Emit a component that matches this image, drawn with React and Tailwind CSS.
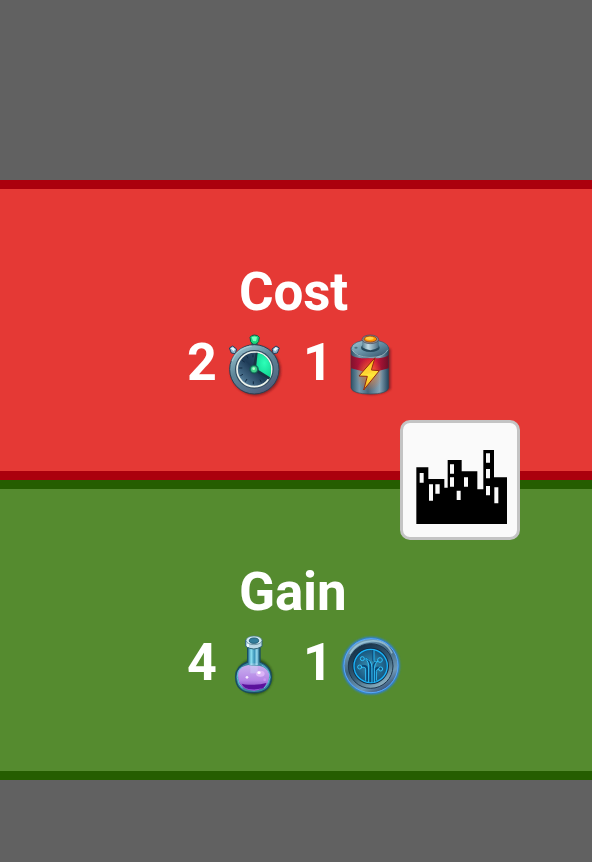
import React from 'react';

function Stopwatch() {
  return (
    <svg className="h-[74px] w-[70px] shrink-0" viewBox="0 0 210 222">
      <defs>
        <linearGradient id="sw-case" x1="0.2" y1="0" x2="0.8" y2="1">
          <stop offset="0" stopColor="#9cc6d2" />
          <stop offset="0.4" stopColor="#5f8799" />
          <stop offset="0.75" stopColor="#567089" />
          <stop offset="1" stopColor="#4b5575" />
        </linearGradient>
        <linearGradient id="sw-dial" x1="1" y1="0" x2="0" y2="1">
          <stop offset="0" stopColor="#355d76" />
          <stop offset="0.5" stopColor="#1e3b57" />
          <stop offset="1" stopColor="#6a97b4" />
        </linearGradient>
        <radialGradient id="sw-green" cx="0.6" cy="0.4" r="0.7">
          <stop offset="0" stopColor="#2dffb8" />
          <stop offset="1" stopColor="#0cce8c" />
        </radialGradient>
        <filter id="sw-shadow"><feGaussianBlur stdDeviation="3" /></filter>
      </defs>
      <ellipse cx="107" cy="128" rx="76" ry="75" fill="#64151b" opacity="0.65" filter="url(#sw-shadow)" />
      <path d="M94 42h19v15H94z" fill="#315c67" />
      <path d="M90 28q4-7 13-7 11 0 15 7l-2 13-8 8H99l-7-8z" fill="#1bd77c" stroke="#165346" strokeWidth="3" />
      <path d="M95 28q8-5 16 0l-3 12-9-1z" fill="#79ffc1" />
      <path d="m28 60 10-6 12 9-4 14-12-2z M178 60l-10-6-12 9 4 14 12-2z" fill="#91b7d0" stroke="#283d59" strokeWidth="3" />
      <path d="m32 61 7-3 6 6-4 6z M174 61l-7-3-6 6 4 6z" fill="#eefaff" />
      <circle cx="103" cy="124" r="74" fill="url(#sw-case)" stroke="#2b4053" strokeWidth="3" />
      <path d="M36 100Q48 61 95 54" fill="none" stroke="#b4dae1" strokeWidth="5" opacity="0.6" />
      <circle cx="103" cy="124" r="58" fill="#344c60" />
      <circle cx="103" cy="124" r="52" fill="url(#sw-dial)" stroke="#edf4ed" strokeWidth="5" />
      <path d="M103 124 112 74Q140 80 151 108 156 130 150 150z" fill="url(#sw-green)" />
      <path d="M99 79v9M80 83l4 8M66 97l8 5M57 120h10M61 143l8-4M76 161l5-8M100 169v-9M124 163l-4-8" stroke="#122a43" strokeWidth="3" />
      <path d="M98 119 107 74h6l-5 45zM103 129l4-8 43 27-2 7z" fill="#193344" />
      <circle cx="102" cy="124" r="13" fill="#187b60" stroke="#17464d" strokeWidth="2" />
      <circle cx="102" cy="124" r="9" fill="#42d58b" />
      <circle cx="101" cy="122" r="4" fill="#b2ffd0" />
    </svg>
  );
}

function Battery() {
  return (
    <svg className="h-[74px] w-[66px] shrink-0" viewBox="-6 0 198 222">
      <defs>
        <linearGradient id="bt-metal">
          <stop offset="0" stopColor="#2f5368" />
          <stop offset="0.22" stopColor="#7699ad" />
          <stop offset="0.45" stopColor="#46657c" />
          <stop offset="0.76" stopColor="#87a5b6" />
          <stop offset="1" stopColor="#22445c" />
        </linearGradient>
        <linearGradient id="bt-red">
          <stop offset="0" stopColor="#82112d" />
          <stop offset="0.25" stopColor="#b3143a" />
          <stop offset="0.6" stopColor="#e41a38" />
          <stop offset="0.8" stopColor="#a01233" />
          <stop offset="1" stopColor="#6e0f27" />
        </linearGradient>
        <linearGradient id="bt-top" x1="0" y1="0" x2="1" y2="1">
          <stop offset="0" stopColor="#a7c9d4" />
          <stop offset="0.5" stopColor="#6690a5" />
          <stop offset="1" stopColor="#314e65" />
        </linearGradient>
        <linearGradient id="bt-neck">
          <stop offset="0" stopColor="#5a7f92" />
          <stop offset="0.35" stopColor="#c1dae4" />
          <stop offset="1" stopColor="#4a6a80" />
        </linearGradient>
        <radialGradient id="bt-glow">
          <stop offset="0.3" stopColor="#f98a38" />
          <stop offset="1" stopColor="#f76924" stopOpacity="0" />
        </radialGradient>
        <linearGradient id="bt-bolt" x1="0" y1="0" x2="0" y2="1">
          <stop offset="0" stopColor="#ffac19" />
          <stop offset="0.55" stopColor="#ffe83a" />
          <stop offset="1" stopColor="#fca719" />
        </linearGradient>
        <filter id="bt-shadow"><feGaussianBlur stdDeviation="3" /></filter>
      </defs>
      <path d="M36 62h116v122q-48 31-114 3z" fill="#65151c" opacity="0.65" filter="url(#bt-shadow)" />
      <path d="M33 58v122q6 18 57 18t56-18V58z" fill="url(#bt-metal)" stroke="#354755" strokeWidth="2" />
      <path d="M33 77q0 14 57 14t56-14v44q-56 20-113 0z" fill="url(#bt-red)" />
      <ellipse cx="90" cy="61" rx="56" ry="26" fill="url(#bt-top)" stroke="#35556a" strokeWidth="2" />
      <path d="M36 65q12 22 54 23t54-23" fill="none" stroke="#b4cfd7" strokeWidth="2" />
      <ellipse cx="91" cy="59" rx="28" ry="13" fill="#27475a" />
      <path d="M67 33v25q24 17 49 0V33z" fill="url(#bt-neck)" />
      <ellipse cx="91" cy="34" rx="25" ry="13" fill="#8c8a8c" stroke="#45485a" strokeWidth="2" />
      <ellipse cx="91" cy="33" rx="19" ry="9" fill="#ff9700" stroke="#812c16" strokeWidth="2" />
      <ellipse cx="89" cy="31" rx="12" ry="5" fill="#ffd14a" />
      <ellipse cx="48" cy="59" rx="5" ry="3" fill="#4d7180" />
      <ellipse cx="88" cy="139" rx="40" ry="52" fill="url(#bt-glow)" opacity="0.6" />
      <path d="M105 89 57 144l25 1-11 41 47-58-24-2z" fill="url(#bt-bolt)" stroke="#91280f" strokeWidth="3" strokeLinejoin="round" />
      <path d="m93 107-28 34 20-4 9-4z" fill="#ffcd31" opacity="0.6" />
    </svg>
  );
}

function Flask() {
  return (
    <svg className="h-[70px] w-[60px] shrink-0" viewBox="0 0 180 210">
      <defs>
        <linearGradient id="fl-glass">
          <stop offset="0" stopColor="#3d8db0" />
          <stop offset="0.25" stopColor="#8bdff1" />
          <stop offset="0.55" stopColor="#3a93b8" />
          <stop offset="0.8" stopColor="#9dddf0" />
          <stop offset="1" stopColor="#2b7497" />
        </linearGradient>
        <linearGradient id="fl-liquid" x1="0.5" y1="0" x2="0.5" y2="1">
          <stop offset="0" stopColor="#c9b2ee" />
          <stop offset="0.6" stopColor="#b585e6" />
          <stop offset="1" stopColor="#7a3dbb" />
        </linearGradient>
        <filter id="fl-shadow"><feGaussianBlur stdDeviation="3" /></filter>
      </defs>
      <circle cx="89" cy="140" r="54" fill="#1e3c19" opacity="0.75" filter="url(#fl-shadow)" />
      <path d="M68 52h37v44q34 13 34 44 0 48-53 48-54 0-54-48 0-31 36-44z" fill="#3a86a0" stroke="#194d61" strokeWidth="4" />
      <path d="M71 51h31v54H71z" fill="url(#fl-glass)" />
      <path d="M40 122q6-12 30-17 18 5 32 2 24 5 30 22 4 52-46 52-53 0-46-59z" fill="url(#fl-liquid)" />
      <path d="M50 161q12 4 24 3 30 2 50-5-2 9-8 14-26 14-54 1-8-4-12-13z" fill="#5a119c" />
      <path d="M60 175q26 8 52-1-25 16-52 1z" fill="#9b55dc" />
      <path d="M51 112q-15 9-14 31 3 22 16 32M110 105q24 12 25 38-4 20-18 31" fill="none" stroke="#61bdda" strokeWidth="3" />
      <path d="M76 100h22v30H76z" fill="#cfe0fa" opacity="0.35" />
      <ellipse cx="106" cy="131" rx="13" ry="9" fill="#dcb4f7" />
      <ellipse cx="102" cy="128" rx="5" ry="4" fill="#fff" />
      <circle cx="66" cy="142" r="4" fill="#f4e8ff" />
      <circle cx="119" cy="149" r="4" fill="#cd92f5" />
      <path d="M62 30v19q24 16 49 0V30z" fill="#b9d9e6" stroke="#326779" strokeWidth="3" />
      <ellipse cx="87" cy="31" rx="24" ry="13" fill="#d0eaf3" stroke="#467486" strokeWidth="2" />
      <ellipse cx="87" cy="32" rx="14" ry="8" fill="#327e9b" stroke="#225e77" strokeWidth="3" />
      <path d="M69 41v10" stroke="#f5ffff" strokeWidth="5" />
    </svg>
  );
}

function Coin() {
  return (
    <svg className="h-[70px] w-[70px] shrink-0" viewBox="0 0 210 210">
      <defs>
        <linearGradient id="cn-rim" x1="0.2" y1="0" x2="0.8" y2="1">
          <stop offset="0" stopColor="#86b4cb" />
          <stop offset="0.4" stopColor="#3d6480" />
          <stop offset="0.75" stopColor="#6f9ab6" />
          <stop offset="1" stopColor="#293f68" />
        </linearGradient>
        <linearGradient id="cn-inner" x1="0.2" y1="0" x2="0.8" y2="1">
          <stop offset="0" stopColor="#122c42" />
          <stop offset="0.55" stopColor="#375e78" />
          <stop offset="1" stopColor="#9cc0d0" />
        </linearGradient>
        <radialGradient id="cn-face">
          <stop offset="0" stopColor="#3a93b8" />
          <stop offset="1" stopColor="#17547b" />
        </radialGradient>
        <filter id="cn-glow"><feGaussianBlur stdDeviation="2.5" /></filter>
      </defs>
      <circle cx="105" cy="107" r="86" fill="#2a7ff0" filter="url(#cn-glow)" />
      <circle cx="105" cy="107" r="81" fill="url(#cn-rim)" stroke="#5aa9f5" strokeWidth="3" />
      <path d="M42 72Q59 36 105 33t63 37" fill="none" stroke="#aad2e2" strokeWidth="5" opacity="0.7" />
      <circle cx="104" cy="108" r="67" fill="url(#cn-inner)" stroke="#1e384e" strokeWidth="3" />
      <circle cx="104" cy="108" r="55" fill="#122f49" />
      <circle cx="104" cy="108" r="50" fill="url(#cn-face)" stroke="#18b4fb" strokeWidth="4" />
      <g fill="none" stroke="#094776" strokeWidth="6">
        <path d="M93 154V116q0-11-16-7M103 157V105Q99 84 85 87M111 157V113q0-13 18-23M119 154V119q3-10 17-3M112 60v34" />
      </g>
      <g fill="none" stroke="#2fc1fa" strokeWidth="3">
        <path d="M89 152V119q0-9-13-7M98 156V106Q94 85 85 87M108 157V112q-2-22-19-27M115 157V116q0-16 12-24M121 152V124q2-8 8-7M114 60v31q2 8 12 1" />
        <circle cx="79" cy="86" r="6" />
        <circle cx="71" cy="111" r="6" />
        <circle cx="132" cy="90" r="7" />
        <circle cx="134" cy="117" r="6" />
      </g>
    </svg>
  );
}

function CityTile() {
  return (
    <div className="absolute left-[400px] top-[240px] size-[120px] rounded-[10px] border-[3px] border-[#c4c4c4] bg-[#fafafa]">
      <svg className="-m-[3px] size-[120px]" viewBox="18 18 360 360">
        <path
          d="M67 160h36v35h48v26h10v-83h42v34h47v54h18V108h32v82h39v140H67z"
          fill="#000"
        />
        <path
          d="M77 177h12v29H77zM105 211h12v49h-12zM124 211h13v28h-13zM168 151h12v28h-12zM168 190h12v28h-12zM188 230h12v28h-12zM210 190h12v28h-12zM276 118h12v28h-12zM276 165h12v28h-12zM276 216h12v28h-12zM301 220h12v48h-12z"
          fill="#fafafa"
        />
      </svg>
    </div>
  );
}

function Amount({ value, children }) {
  return (
    <div className="flex h-[60px] items-center gap-2">
      <span className="h-[60px] w-[30px] text-[52px] leading-[56px]">{value}</span>
      <div className="flex size-[60px] items-center justify-center">{children}</div>
    </div>
  );
}

function Panel({ title, className, children }) {
  return (
    <section className={`h-[300px] border-y-[9px] pt-[71px] ${className}`}>
      <div className="flex w-[588px] flex-col items-center">
        <h2 className="h-[64px] w-[110px] leading-[64px] tracking-[-0.2px]">{title}</h2>
        <div className="mt-[11px] flex gap-[18px]">{children}</div>
      </div>
    </section>
  );
}

export default function App() {
  return (
    <main className="h-[862px] w-[592px] overflow-hidden bg-[#616161] pt-[180px] font-['Roboto',sans-serif] text-[53px] font-bold text-white">
      <div className="relative">
        <Panel title="Cost" className="border-[#ab000d] bg-[#e53935]">
          <Amount value="2"><Stopwatch /></Amount>
          <Amount value="1"><Battery /></Amount>
        </Panel>
        <Panel title="Gain" className="border-[#255d00] bg-[#558b2f]">
          <Amount value="4"><Flask /></Amount>
          <Amount value="1"><Coin /></Amount>
        </Panel>
        <CityTile />
      </div>
    </main>
  );
}
